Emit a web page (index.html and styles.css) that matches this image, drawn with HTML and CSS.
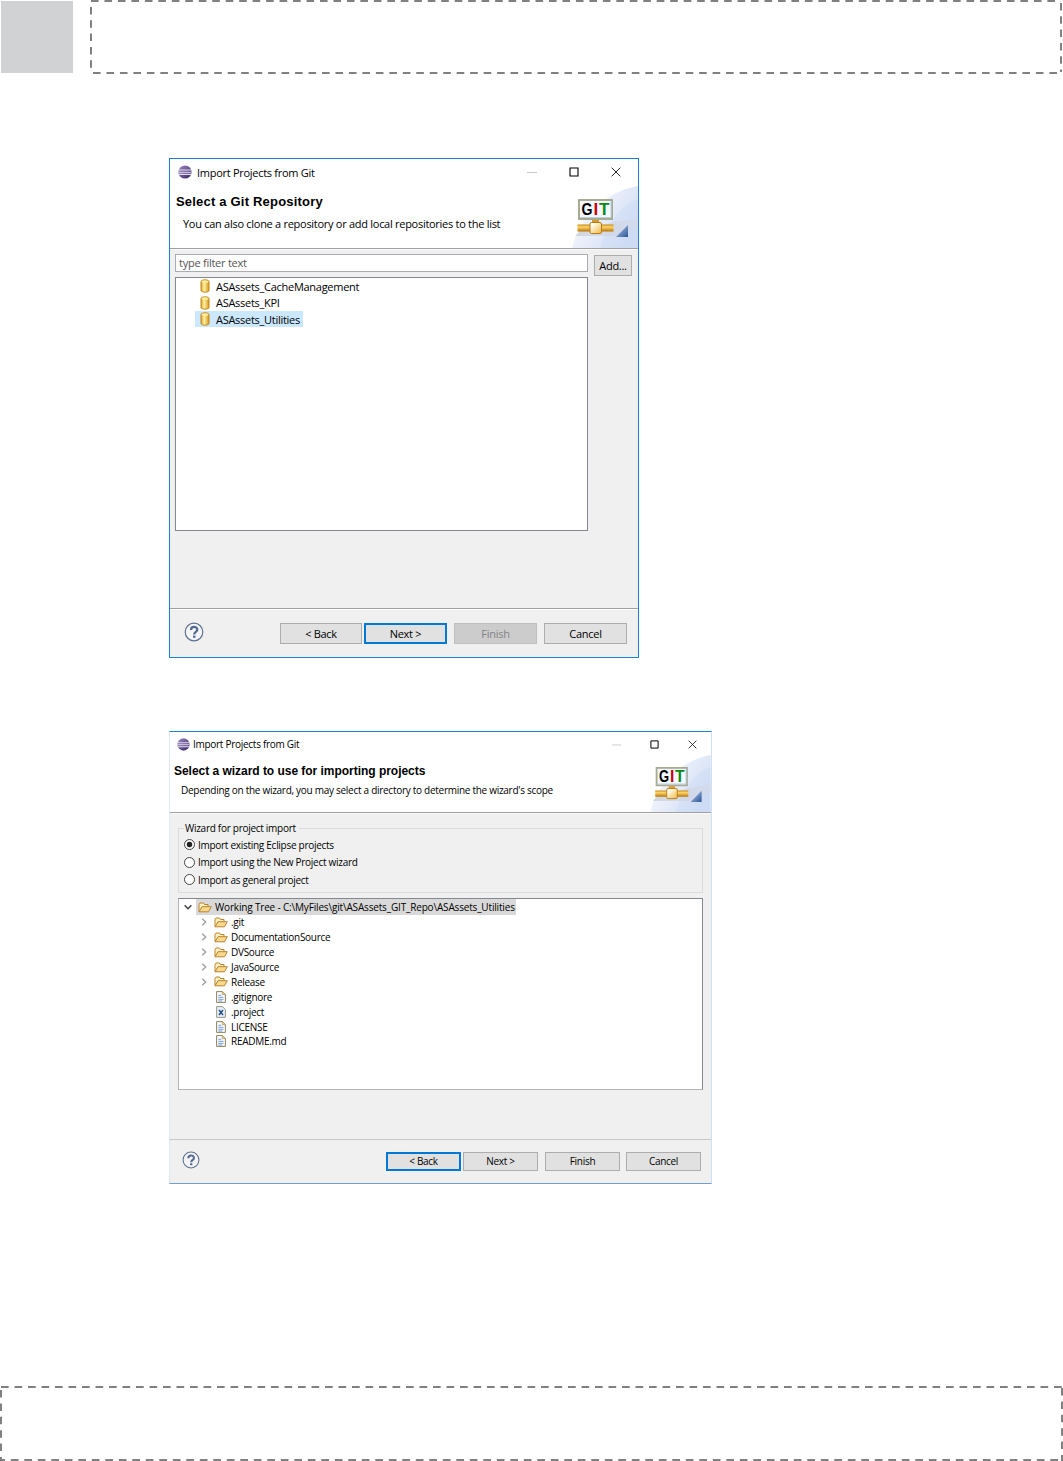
FILE: index.html
```html
<!DOCTYPE html>
<html lang="en">
<head>
  <meta charset="UTF-8"/>
  <meta name="viewport" content="width=device-width, initial-scale=1"/>
  <title>Import Projects from Git</title>
  <link rel="stylesheet" href="styles.css">
</head>
<body>

  <!-- shared icons -->
  <svg class="defs" width="0" height="0">
    <defs>
      <linearGradient id="ball" x1="0" y1="0" x2="1" y2="1">
        <stop offset="0" stop-color="#a08cc4"/>
        <stop offset="1" stop-color="#33215f"/>
      </linearGradient>
      <linearGradient id="gold" x1="0" y1="0" x2="1" y2="0">
        <stop offset="0" stop-color="#e0a020"/>
        <stop offset="0.4" stop-color="#fff3a8"/>
        <stop offset="1" stop-color="#d9960f"/>
      </linearGradient>
      <linearGradient id="pipe" x1="0" y1="0" x2="0" y2="1">
        <stop offset="0" stop-color="#c98a10"/>
        <stop offset="0.35" stop-color="#ffd56a"/>
        <stop offset="1" stop-color="#b97405"/>
      </linearGradient>
      <linearGradient id="node" x1="0" y1="0" x2="1" y2="1">
        <stop offset="0.2" stop-color="#fffdf0"/>
        <stop offset="1" stop-color="#f0b840"/>
      </linearGradient>
      <linearGradient id="sky" x1="0" y1="0" x2="1" y2="0.6">
        <stop offset="0" stop-color="#ffffff"/>
        <stop offset="1" stop-color="#d3dff5"/>
      </linearGradient>
      <linearGradient id="shade" x1="0" y1="0" x2="1" y2="0">
        <stop offset="0" stop-color="#c4c8d2" stop-opacity="0.7"/>
        <stop offset="1" stop-color="#d5dae6" stop-opacity="0.5"/>
      </linearGradient>
      <linearGradient id="corner" x1="0" y1="0" x2="1" y2="1">
        <stop offset="0.3" stop-color="#8fabd6"/>
        <stop offset="1" stop-color="#2c5596"/>
      </linearGradient>
    </defs>
    <symbol id="eclipse" viewBox="0 0 14 14">
      <circle cx="7" cy="7" r="6.6" fill="url(#ball)"/>
      <path d="M1 5h12M.6 7.2h12.8M1 9.4h12" stroke="#e6def2" stroke-width="1.1"/>
    </symbol>
    <symbol id="banner" viewBox="0 0 66 62">
      <path d="M0 62C6 36 30 6 66 0V62z" fill="url(#sky)"/>
      <path d="M28 62C34 40 48 18 66 13V62z" fill="#c5d5f2" opacity="0.3"/>
      <path d="M42 36L66 32V42L42 50H3L8 45z" fill="url(#shade)"/>
      <rect x="7" y="14" width="33" height="19" fill="#f4f8ff" stroke="#a9aa93" stroke-width="2"/>
      <path d="M8 31.5H39V15" fill="none" stroke="#b8d0e6"/>
      <path d="M20 34h7v4h-7z" fill="#d79a2b"/>
      <path d="M5.500 38.500h36v7h-36z" fill="url(#pipe)"/>
      <rect x="18" y="36.500" width="11.500" height="11" rx="1.500" fill="url(#node)" stroke="#b97a12"/>
      <path d="M56 39V51H44z" fill="url(#corner)"/>
    </symbol>
    <symbol id="db" viewBox="0 0 10 14">
      <path d="M1 2.500C1 .3 9 .3 9 2.500V11.500C9 13.700 1 13.700 1 11.500z" fill="url(#gold)" stroke="#c18a1c"/>
      <ellipse cx="5" cy="2.600" rx="3.500" ry="1.200" fill="#fff0a0"/>
    </symbol>
    <symbol id="help" viewBox="0 0 20 20">
      <circle cx="10" cy="10" r="8.800" fill="#f4f5f8" stroke="#60708f" stroke-width="1.200"/>
      <path d="M7 8C7 3.900 13.300 4 13.300 7.700C13.300 9.900 10.200 9.900 10.200 12.400" fill="none" stroke="#566a91" stroke-width="2.300"/>
      <path d="M9 13.600h2.500v2.200H9z" fill="#566a91"/>
    </symbol>
    <symbol id="folder" viewBox="0 0 14 11">
      <path d="M1 9.500V2.500L2 1h3.500l1 1.500h3.500v2" fill="#fff0c0" stroke="#b98332"/>
      <path d="M1 9.800L4 4.700h9.300L10.500 9.800z" fill="#fbd98b" stroke="#b98332"/>
    </symbol>
    <symbol id="file" viewBox="0 0 10 12">
      <path d="M.6.600h5.900L9.400 3.500v7.900H.6z" fill="#fbfcff" stroke="#8c8359"/>
      <path d="M6.300.600v3h3" fill="#e8d28c" stroke="#a58f4e" stroke-width=".7"/>
      <path d="M2.300 4.300h3M2.300 6.300h5.200M2.300 8.300h5.200M2.300 10h4" stroke="#6a8fce" stroke-width=".9"/>
    </symbol>
    <symbol id="xfile" viewBox="0 0 10 12">
      <path d="M.6.600h5.900L9.400 3.500v7.900H.6z" fill="#e4edfa" stroke="#9a9a86"/>
      <path d="M3 4l4 5M7 4L3 9" stroke="#234a80" stroke-width="1.400"/>
    </symbol>
    <symbol id="closed" viewBox="0 0 8 8">
      <path d="M2.200.700L5.700 4 2.200 7.300" fill="none" stroke="#a0a0a0" stroke-width="1.400"/>
    </symbol>
    <symbol id="open" viewBox="0 0 8 8">
      <path d="M.7 2.300L4 5.700 7.300 2.300" fill="none" stroke="#404040" stroke-width="1.500"/>
    </symbol>
    <symbol id="winmin" viewBox="0 0 10 10">
      <path d="M0 5.500h10" stroke="#c8c8c8"/>
    </symbol>
    <symbol id="winmax" viewBox="0 0 10 10">
      <path d="M1 1h8v8H1z" fill="none" stroke="#000" stroke-width="1.100"/>
    </symbol>
    <symbol id="winclose" viewBox="0 0 10 10">
      <path d="M.7.700l8.600 8.600M9.300.700L.7 9.300" stroke="#222" stroke-width="1"/>
    </symbol>
  </svg>

  <header class="page-header">
    <div class="logo"></div>
    <svg class="dashes" width="972" height="74">
      <path d="M1 1H971M3 73H971" stroke-dasharray="7.600 5.870"/>
      <path d="M1 7V72M971 3V72" stroke-dasharray="7.500 5.800"/>
    </svg>
  </header>

  <main>
    <section class="dialog repo">
      <div class="titlebar">
        <svg class="ball"><use href="#eclipse"/></svg>
        <span class="caption">Import Projects from Git</span>
        <svg><use href="#winmin"/></svg>
        <svg><use href="#winmax"/></svg>
        <svg><use href="#winclose"/></svg>
      </div>
      <div class="heading">
        <div class="words">
          <h1>Select a Git Repository</h1>
          <p>You can also clone a repository or add local repositories to the list</p>
        </div>
        <svg class="banner" viewBox="0 0 66 62">
          <use href="#banner" width="66" height="62"/>
          <text x="9.5" y="29.3" textLength="11" lengthAdjust="spacingAndGlyphs">G</text>
          <text class="red" x="21.500" y="29.3">I</text>
          <text class="green" x="27" y="29.3">T</text>
        </svg>
      </div>
      <div class="content">
        <div class="left">
          <div class="filter">type filter text</div>
          <ul class="repos">
            <li><span><svg><use href="#db"/></svg>ASAssets_CacheManagement</span></li>
            <li><span><svg><use href="#db"/></svg>ASAssets_KPI</span></li>
            <li><span class="selected"><svg><use href="#db"/></svg>ASAssets_Utilities</span></li>
          </ul>
        </div>
        <button class="add">Add...</button>
      </div>
      <div class="buttons">
        <svg class="help"><use href="#help"/></svg>
        <button>&lt; Back</button>
        <button class="default">Next &gt;</button>
        <button class="finish" disabled>Finish</button>
        <button>Cancel</button>
      </div>
    </section>

    <section class="dialog wizard">
      <div class="titlebar">
        <svg class="ball"><use href="#eclipse"/></svg>
        <span class="caption">Import Projects from Git</span>
        <svg><use href="#winmin"/></svg>
        <svg><use href="#winmax"/></svg>
        <svg><use href="#winclose"/></svg>
      </div>
      <div class="heading">
        <div class="words">
          <h1>Select a wizard to use for importing projects</h1>
          <p>Depending on the wizard, you may select a directory to determine the wizard's scope</p>
        </div>
        <svg class="banner" viewBox="0 0 66 62">
          <use href="#banner" width="66" height="62"/>
          <text x="9.5" y="29.3" textLength="11" lengthAdjust="spacingAndGlyphs">G</text>
          <text class="red" x="21.500" y="29.3">I</text>
          <text class="green" x="27" y="29.3">T</text>
        </svg>
      </div>
      <div class="content">
        <fieldset>
          <legend>Wizard for project import</legend>
          <label><i class="radio on"></i>Import existing Eclipse projects</label>
          <label><i class="radio"></i>Import using the New Project wizard</label>
          <label><i class="radio"></i>Import as general project</label>
        </fieldset>
        <ul class="tree">
          <li class="root"><svg class="arrow"><use href="#open"/></svg><span class="selected"><svg class="folder"><use href="#folder"/></svg>Working Tree - C:\MyFiles\git\ASAssets_GIT_Repo\ASAssets_Utilities</span></li>
          <li><svg class="arrow"><use href="#closed"/></svg><svg class="folder"><use href="#folder"/></svg>.git</li>
          <li><svg class="arrow"><use href="#closed"/></svg><svg class="folder"><use href="#folder"/></svg>DocumentationSource</li>
          <li><svg class="arrow"><use href="#closed"/></svg><svg class="folder"><use href="#folder"/></svg>DVSource</li>
          <li><svg class="arrow"><use href="#closed"/></svg><svg class="folder"><use href="#folder"/></svg>JavaSource</li>
          <li><svg class="arrow"><use href="#closed"/></svg><svg class="folder"><use href="#folder"/></svg>Release</li>
          <li class="leaf"><svg class="file"><use href="#file"/></svg>.gitignore</li>
          <li class="leaf"><svg class="file"><use href="#xfile"/></svg>.project</li>
          <li class="leaf"><svg class="file"><use href="#file"/></svg>LICENSE</li>
          <li class="leaf"><svg class="file"><use href="#file"/></svg>README.md</li>
        </ul>
      </div>
      <div class="buttons">
        <svg class="help"><use href="#help"/></svg>
        <button class="default">&lt; Back</button>
        <button>Next &gt;</button>
        <button class="finish">Finish</button>
        <button>Cancel</button>
      </div>
    </section>
  </main>

  <footer>
    <svg class="dashes" width="1063" height="75">
      <path d="M1 1H1062" stroke-dasharray="7.700 5.800"/>
      <path d="M0 74H1063" stroke-dasharray="7.700 5.800" stroke-dashoffset="2.700"/>
      <path d="M1 4V75M1062 2V75" stroke-dasharray="7.500 5.900"/>
    </svg>
  </footer>

</body>
</html>
```
FILE: styles.css
```css
* {
  box-sizing: border-box;
}

body {
  margin: 0;
  height: 1461px;
  display: flex;
  flex-direction: column;
  background: #fff;
  color: #000;
  font-family: "Open Sans", "Noto Sans", sans-serif;
  overflow: hidden;
}

svg {
  display: block;
  flex: none;
}

.defs {
  height: 0;
}

/* page header and footer placeholders */
.page-header {
  display: flex;
  height: 74px;
}

.logo {
  width: 72px;
  height: 72px;
  margin: 1px 17px 0 1px;
  background: #d1d2d4;
}

.dashes {
  fill: none;
  stroke: #808080;
  stroke-width: 2;
}

main {
  flex: 1;
  padding: 84px 0 0 169px;
}

footer {
  height: 75px;
}

/* dialogs */
.dialog {
  display: flex;
  flex-direction: column;
  border: 1px solid #1883d7;
  background: #f0f0f0;
  letter-spacing: -0.28px;
  white-space: nowrap;
}

.repo {
  width: 470px;
  height: 500px;
  font-size: 11px;
}

.wizard {
  width: 543px;
  height: 453px;
  margin-top: 73px;
  font-size: 10px;
  border-color: #1883d7 #cfe0f2 #6ea0cb #dde8f2;
}

.titlebar {
  display: flex;
  align-items: center;
  height: 29px;
  padding: 0 17px 3px 8px;
  background: #fff;
}

.titlebar svg {
  width: 10px;
  height: 10px;
  margin-left: 32px;
}

.titlebar .ball {
  width: 14px;
  height: 14px;
  margin: 0 5px 0 0;
}

.caption {
  flex: 1;
}

.heading {
  display: flex;
  height: 61px;
  background: #fff;
  border-bottom: 1px solid #a0a0a0;
}

.words {
  flex: 1;
}

h1 {
  margin: 0;
  font: bold 13px/16px "Liberation Sans", Arial, sans-serif;
  letter-spacing: 0.2px;
}

p {
  margin: 0;
  line-height: 16px;
}

.repo .heading h1 {
  padding: 6px 0 0 6px;
}

.repo .heading p {
  padding: 6px 0 0 13px;
}

.banner {
  width: 66px;
  height: 62px;
  margin-top: -2px;
}

.banner text {
  font: bold 17px "Liberation Sans", Arial, sans-serif;
  letter-spacing: 0;
}

.banner .red {
  fill: #c8000c;
}

.banner .green {
  fill: #078a12;
}

.content {
  flex: 1;
}

.repo .content {
  display: flex;
  align-items: flex-start;
  gap: 6px;
  padding: 4px 5px 0;
  border-top: 1px solid #fafafa;
}

.left {
  width: 413px;
}

.filter {
  height: 18px;
  padding-left: 3px;
  line-height: 15px;
  border: 1px solid #a9acb2;
  background: #fff;
  color: #555;
  letter-spacing: -0.25px;
}

ul {
  margin: 0;
  padding: 0;
  list-style: none;
  background: #fff;
  border: 1px solid #828790;
}

.repos {
  height: 254px;
  margin-top: 5px;
  padding: 0 0 0 19px;
}

.repos li {
  height: 16.6px;
}

.repos span {
  display: inline-flex;
  align-items: center;
  height: 16px;
  padding: 0 3px 0 5px;
}

.repos svg {
  width: 10px;
  height: 14px;
  margin-right: 6px;
}

.repos .selected {
  background: #cce8ff;
}

button {
  display: block;
  padding: 0 0 1px;
  font: inherit;
  letter-spacing: inherit;
  text-align: center;
  color: #000;
  background: #e1e1e1;
  border: 1px solid #adadad;
  border-radius: 0;
}

.default {
  border: 2px solid #0078d7;
}

button:disabled {
  color: #838383;
  background: #ccc;
  border-color: #bfbfbf;
}

.add {
  width: 38px;
  height: 21px;
  margin-top: 1px;
}

.buttons {
  display: flex;
  height: 49px;
  padding: 14px 11px 0 14px;
  border-top: 1px solid #a0a0a0;
  box-shadow: inset 0 1px #fff;
}

.buttons button {
  width: 83px;
  height: 21px;
  margin-left: 7px;
}

.repo .buttons button:nth-of-type(1) {
  width: 82px;
  margin-left: auto;
}

.repo .buttons button:nth-of-type(2) {
  margin-left: 2px;
}

.help {
  width: 20px;
  height: 20px;
  margin-top: -1px;
}

/* second dialog is drawn a little smaller */
.wizard .titlebar {
  height: 25px;
  padding: 0 14px 1px 7px;
}

.wizard .titlebar svg {
  width: 9px;
  height: 9px;
  margin-left: 29px;
}

.wizard .titlebar .ball {
  width: 13px;
  height: 13px;
  margin: 0 3px 0 0;
}

.wizard .heading {
  height: 56px;
}

.wizard h1 {
  padding: 6px 0 0 4px;
  font-size: 12px;
  letter-spacing: -0.03px;
}

.wizard p {
  padding: 3px 0 0 11px;
}

.wizard .banner {
  width: 61px;
  height: 57px;
}

.wizard .content {
  padding: 7px 8px 0;
  border-top: 1px solid #fafafa;
}

fieldset {
  height: 72px;
  margin: 0;
  padding: 0 0 0 5px;
  border: 1px solid #dcdcdc;
}

legend {
  height: 15px;
  padding: 0 3px 0 1px;
  line-height: 14px;
}

label {
  display: flex;
  align-items: center;
  height: 17.5px;
}

.radio {
  width: 11px;
  height: 11px;
  margin-right: 3px;
  border: 1px solid #444;
  border-radius: 50%;
  background: #fff;
}

.radio.on {
  background: radial-gradient(circle, #222 2.4px, #fff 3.2px);
}

.tree {
  height: 192px;
  margin-top: 5px;
  padding-top: 1px;
  border-color: #828790 #828790 #b4b4b4 #b4b4b4;
}

.tree li {
  display: flex;
  align-items: center;
  height: 14.9px;
  padding-left: 21px;
}

.tree .root {
  padding-left: 5px;
  letter-spacing: -0.17px;
}

.tree .leaf {
  padding-left: 37px;
}

.tree .selected {
  display: flex;
  align-items: center;
  height: 16px;
  margin-left: -2px;
  padding: 0 1px 0 2px;
  background: #d9d9d9;
}

.arrow {
  width: 8px;
  height: 8px;
  margin-right: 6px;
}

.folder {
  width: 14px;
  height: 11px;
  margin-right: 3px;
}

.file {
  width: 10px;
  height: 12px;
  margin-right: 5px;
}

.wizard .buttons {
  height: 44px;
  padding: 12px 10px 0 12px;
  border-color: #c8c8c8;
  box-shadow: none;
}

.wizard .buttons button {
  width: 75px;
  height: 19px;
  margin-left: 6px;
}

.wizard .buttons button:nth-of-type(1) {
  margin-left: auto;
}

.wizard .buttons button:nth-of-type(2) {
  margin-left: 2px;
}

.wizard .buttons .finish {
  margin-left: 7px;
}

.wizard .help {
  width: 18px;
  height: 18px;
}
```
